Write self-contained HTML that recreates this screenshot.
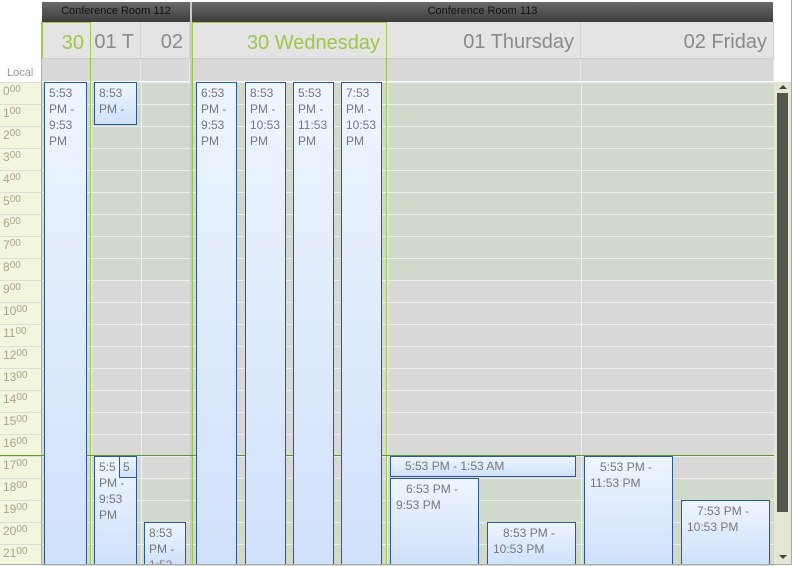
<!DOCTYPE html>
<html><head><meta charset="utf-8"><style>
*{margin:0;padding:0;box-sizing:border-box}
body{width:792px;height:565px;overflow:hidden;background:#fff;font-family:"Liberation Sans",sans-serif;position:relative}
.a{position:absolute}
.room{position:absolute;top:2px;height:20px;background:linear-gradient(#6a6a6a,#3c3c3c);color:#111;font-size:11px;text-align:center;line-height:19px}
.dh{position:absolute;top:22px;height:36px;background:#e4e4e4;border-right:1px solid #d4d4d4;color:#8a8a8a;font-size:20px;text-align:right;padding-right:6px;line-height:40px;overflow:hidden;white-space:nowrap}
.ad{position:absolute;top:59px;height:22px;background:#d8d8d8;border-right:1px solid #e8e8e8}
.ev{position:absolute;border:1px solid #2b5797;background:linear-gradient(#eef5ff,#cfe1fb);color:#777;font-size:12px;line-height:16px;padding:2px 4px;overflow:hidden}
.tl{position:absolute;left:3px;font-size:12px;color:#aaa58a}
.tl sup{font-size:10px;vertical-align:3px}
</style></head><body>
<div class="room" style="left:42px;width:148px">Conference Room 112</div>
<div class="room" style="left:192px;width:581px">Conference Room 113</div>
<div class="a" style="left:0;top:82px;width:41px;height:483px;background:#f2f6dc"></div>
<div class="a" style="left:7px;top:67px;font-size:11px;color:#999">Local</div>
<div id="grid"></div>
<div class="dh" style="left:42px;width:49px;color:#9cc84a;border:1px solid #9cc84a;border-bottom:none;border-right:1px solid #9cc84a">30</div>
<div class="dh" style="left:91px;width:50px">01 T</div>
<div class="dh" style="left:141px;width:49px">02</div>
<div class="dh" style="left:192px;width:195px;color:#9cc84a;border:1px solid #9cc84a;border-bottom:none">30 Wednesday</div>
<div class="dh" style="left:387px;width:194px">01 Thursday</div>
<div class="dh" style="left:581px;width:193px">02 Friday</div>
<div class="a" style="left:42px;top:58px;width:732px;height:1px;background:#ccc"></div>
<div class="ad" style="left:42px;width:49px"></div>
<div class="ad" style="left:91px;width:50px"></div>
<div class="ad" style="left:141px;width:49px"></div>
<div class="ad" style="left:192px;width:195px"></div>
<div class="ad" style="left:387px;width:194px"></div>
<div class="ad" style="left:581px;width:193px"></div>
<div class="a" style="left:190px;top:2px;width:2px;height:563px;background:#c8c8c8"></div>
<div class="a" style="left:41px;top:22px;width:1px;height:543px;background:#9cc84a"></div>
<div class="a" style="left:90px;top:22px;width:1px;height:543px;background:#9cc84a"></div>
<div class="a" style="left:192px;top:22px;width:1px;height:543px;background:#9cc84a"></div>
<div class="a" style="left:386px;top:22px;width:1px;height:543px;background:#9cc84a"></div>
<div class="a" style="left:0;top:455px;width:774px;height:1px;background:#5a9a2a"></div>

<div class="ev" style="left:44px;top:82px;width:43px;height:483px">5:53 PM - 9:53 PM</div>
<div class="ev" style="left:94px;top:82px;width:43px;height:43px">8:53 PM -</div>
<div class="ev" style="left:94px;top:456px;width:43px;height:109px">5:5 PM - 9:53 PM</div>
<div class="ev" style="left:119px;top:456px;width:18px;height:22px;padding:2px 3px">5</div>
<div class="ev" style="left:144px;top:522px;width:42px;height:43px">8:53 PM - 1:53</div>
<div class="ev" style="left:196px;top:82px;width:41px;height:483px">6:53 PM - 9:53 PM</div>
<div class="ev" style="left:245px;top:82px;width:41px;height:483px">8:53 PM - 10:53 PM</div>
<div class="ev" style="left:293px;top:82px;width:41px;height:483px">5:53 PM - 11:53 PM</div>
<div class="ev" style="left:341px;top:82px;width:41px;height:483px">7:53 PM - 10:53 PM</div>
<div class="ev" style="left:390px;top:456px;width:186px;height:21px;padding:1px 14px">5:53 PM - 1:53 AM</div>
<div class="ev" style="left:390px;top:478px;width:89px;height:87px;padding:2px 5px">&nbsp;&nbsp;&nbsp;6:53 PM - 9:53 PM</div>
<div class="ev" style="left:487px;top:522px;width:89px;height:43px;padding:2px 5px">&nbsp;&nbsp;&nbsp;8:53 PM - 10:53 PM</div>
<div class="ev" style="left:584px;top:456px;width:89px;height:109px;padding:2px 5px">&nbsp;&nbsp;&nbsp;5:53 PM - 11:53 PM</div>
<div class="ev" style="left:681px;top:500px;width:89px;height:65px;padding:2px 5px">&nbsp;&nbsp;&nbsp;7:53 PM - 10:53 PM</div>

<div class="a" style="left:774px;top:82px;width:17px;height:483px;background:#e3e6d3"></div>
<div class="a" style="left:777px;top:93px;width:11px;height:419px;background:#55564e"></div>
<div class="a" style="left:779px;top:85px;width:0;height:0;border-left:4px solid transparent;border-right:4px solid transparent;border-bottom:4px solid #444"></div>
<div class="a" style="left:779px;top:555px;width:0;height:0;border-left:4px solid transparent;border-right:4px solid transparent;border-top:4px solid #444"></div>
<div class="a" style="left:791px;top:0;width:1px;height:565px;background:#aaa"></div>
<div class="a" style="left:0;top:564px;width:792px;height:1px;background:#aaa"></div>
<script>
var g=document.getElementById('grid'),h='';
for(var i=0;i<22;i++){var y=82+i*22;var green=(i<9||i>=18);
h+='<div class="a" style="left:42px;top:'+y+'px;width:732px;height:22px;background:'+(green?'#d1d9cc':'#d8d8d8')+';border-top:1px solid #eee"></div>';
h+='<div class="a" style="left:0;top:'+y+'px;width:41px;height:1px;background:#ddd"></div>';
h+='<div class="tl" style="top:'+(y+2)+'px">'+i+'<sup>00</sup></div>';}
[91,141,387,581].forEach(function(x){h+='<div class="a" style="left:'+x+'px;top:82px;width:1px;height:483px;background:#eee"></div>'});
g.innerHTML=h;
</script>
</body></html>
